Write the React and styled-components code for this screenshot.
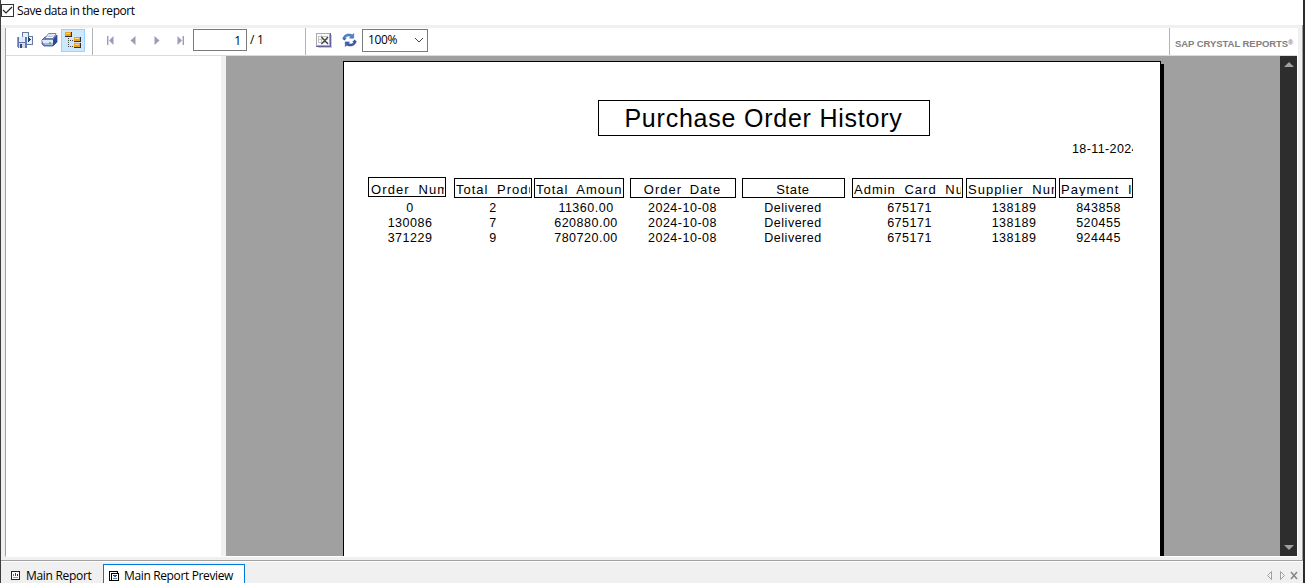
import React from 'react';
import styled, { createGlobalStyle } from 'styled-components';

const Global = createGlobalStyle`
  *{box-sizing:border-box}
  body{margin:0;overflow:hidden;background:#f0f0f0}
`;
const Window = styled.div`
  width:1305px;height:583px;display:flex;flex-direction:column;background:#f0f0f0;
  border-left:1px solid #3c3c3c;border-right:2px solid #2b2b2f;color:#000;
  font:12px/16px "Open Sans","Noto Sans",sans-serif;
`;
const OptionBar = styled.label`
  height:25px;flex:none;background:#fff;display:flex;align-items:flex-start;padding-top:3px;
`;
const Box = styled.span`
  width:13px;height:13px;margin-top:1px;border:1px solid #333;background:#fff;display:flex;svg{display:block}
`;
const UiText = styled.span`
  white-space:pre;letter-spacing:${p => p.$ls || 0}px;margin-left:${p => p.$ml || 0}px;
`;
const PageTotal = styled(UiText)`line-height:24px;`;
const Frame = styled.div`
  height:535px;flex:none;padding:3px 4px 3px 4px;border-right:1px solid #a0a0a0;
`;
const Viewer = styled.div`
  height:529px;width:1293px;border-left:1px solid #a0a0a0;border-right:1px solid #fff;border-bottom:1px solid #fff;
  display:flex;flex-direction:column;
`;
const Toolbar = styled.div`
  height:28px;flex:none;background:#fff;border-bottom:1px solid #dcdcdc;display:flex;align-items:stretch;
`;
const Group = styled.div`
  width:${p => p.$w}px;flex:none;display:flex;align-items:flex-start;padding-left:${p => p.$pl}px;
  border-right:1px solid #b4b4b4;
`;
const ToolButton = styled.button`
  width:${p => p.$w || 24}px;height:23px;margin:1px 0 0;padding:0 0 1px;border:${p => (p.$on ? '1px solid #99d1ff' : '0')};
  background:${p => (p.$on ? '#cce8ff' : 'transparent')};display:flex;align-items:center;justify-content:center;flex:none;
  svg{display:block}
`;
const PageInput = styled.div`
  width:54px;height:22px;margin:1px 0 0 1px;border:1px solid #7a7a7a;text-align:right;line-height:21px;padding-right:5px;
`;
const Zoom = styled.div`
  width:66px;height:23px;margin:1px 0 0 5px;border:1px solid #7a7a7a;display:flex;align-items:center;
  justify-content:space-between;padding:0 3px 1px 5px;
`;
const Brand = styled.div`
  margin-left:auto;width:128px;border-left:1px solid #b4b4b4;padding:8px 0 0 5px;white-space:nowrap;letter-spacing:-.06px;
  font:bold 9.5px/15px "Liberation Sans",Arial,sans-serif;color:#808080;sup{font-size:7px;line-height:0;vertical-align:2px}
`;
const Content = styled.div`flex:1;min-height:0;display:flex;`;
const Tree = styled.div`width:220px;background:#fff;border-right:5px solid #f0f0f0;flex:none;`;
const Canvas = styled.div`flex:1;background:#a0a0a0;padding:5px 0 0 117px;overflow:hidden;`;
const Paper = styled.div`
  width:818px;height:520px;background:#fff;border:1px solid #000;box-shadow:3px 3px 0 #000;
  font-family:"Liberation Sans",Arial,sans-serif;padding:38px 0 0 24px;
`;
const Title = styled.h1`
  width:332px;height:36px;margin:0 0 0 230px;border:1px solid #000;text-align:center;white-space:nowrap;
  padding-right:1px;font-size:25px;line-height:35px;font-weight:400;letter-spacing:.77px;
`;
const PrintDate = styled.div`
  margin:6px 0 0 704px;width:61px;height:15px;line-height:15px;font-size:12.5px;letter-spacing:.4px;overflow:hidden;white-space:nowrap;
`;
const Columns = styled.div`display:flex;align-items:flex-start;margin-top:20px;`;
const Column = styled.div`width:${p => p.$w}px;margin-left:${p => p.$gap}px;flex:none;`;
const Head = styled.div`
  height:20px;margin-top:${p => p.$up ? 0 : 1}px;border:1px solid #000;
  padding:0 1px 0 ${p => (p.$fit ? 0 : p.$up ? 2 : 1)}px;font-size:13px;line-height:${p => (p.$up ? 23 : 21)}px;
  letter-spacing:${p => p.$ls}px;word-spacing:${p => p.$ws}px;
  text-align:${p => (p.$fit ? 'center' : 'left')};
`;
const Clip = styled.div`overflow:hidden;white-space:nowrap;height:17px;`;
const Cell = styled.div`
  height:15px;line-height:15px;font-size:12.5px;text-align:center;letter-spacing:${p => p.$ls}px;
  position:relative;left:${p => p.$dx || 0}px;white-space:nowrap;
`;
const Cells = styled.div`padding-top:${p => p.$up ? 4 : 3}px;`;
const ScrollBar = styled.div`
  width:17px;background:#2d2d2d;display:flex;flex-direction:column;justify-content:space-between;align-items:center;padding:6px 0 6px;
`;
const Arrow = styled.span`
  width:0;height:0;border:5px solid transparent;
  ${p => (p.$up ? 'border-top:0;border-bottom-color:#a0a0a0' : 'border-bottom:0;border-top-color:#a0a0a0')};
`;
const Tabs = styled.div`
  height:23px;border-top:1px solid #a0a0a0;box-shadow:inset 0 1px #fff;display:flex;align-items:flex-start;padding-top:3px;
`;
const Tab = styled.div`
  width:${p => p.$w}px;height:24px;padding:${p => (p.$on ? 3 : 4)}px 0 0 ${p => (p.$on ? 5 : 10)}px;display:flex;
  ${p => p.$on && 'background:#fff;border:1px solid #0078d7;border-bottom:0;'}
  svg{margin-top:3px;flex:none}
`;
const TabNav = styled.div`margin:5px 5px 0 auto;`;

const svg = { shapeRendering: 'crispEdges' };
const Export = () => (
  <svg width="16" height="16" viewBox="0 0 16 16" {...svg}>
    <path d="M5.5.5h6l4 4v8h-10z" fill="#e8f0fb" stroke="#66799f" />
    <path d="M11.5.5v4h4" fill="#fff" stroke="#66799f" />
    <path d="M11 5h1v1h1v1h1v1h-1v1h-1v1h-1z" fill="#084a70" />
    <path d="M0 5h10v11H1v-1H0z" fill="#6279b8" />
    <path d="M2 5h6v5H2z" fill="#e4eafa" /><path d="M0 5h1v10H0z" fill="#8798ca" />
    <path d="M2 11h6v5H2z" fill="#d3d8e4" /><path d="M3 12h2v4H3z" fill="#334777" />
  </svg>
);
const Printer = () => (
  <svg width="17" height="16" viewBox="0 0 17 16">
    <path d="M1 8l3-3h9l3-2v7l-4 4H3l-2-2z" fill="#6f83bd" stroke="#3d4f99" strokeWidth=".8" />
    <path d="M4 6.5L7.5 1.5H15L12 6.5z" fill="#fff" stroke="#5668a3" strokeWidth=".8" />
    <path d="M7.5 3h5M6.5 4.5h5" stroke="#a7b3d4" strokeWidth=".8" />
    <path d="M1 8h11v3H2z" fill="#e3e9f8" /><path d="M2 11h10v2H4z" fill="#a7b5df" />
    <path d="M12 7.5l4-4V10l-4 4z" fill="#31489a" />
    <path d="M8 11h2" stroke="#18c840" strokeWidth="1.7" />
  </svg>
);
const TreeIcon = () => (
  <svg width="16" height="16" viewBox="0 0 16 16" {...svg}>
    <path d="M3.5 6v9M3 8.5h6M3 14.5h6" fill="none" stroke="#444" strokeDasharray="1 1" />
    {[[0, 0], [9, 5], [9, 11]].map(([x, y]) => (
      <g key={`${x}-${y}`}><path d={`M${x} ${y}h7v5h-7z`} fill="#383027" /><path d={`M${x} ${y}h6v4h-6z`} fill="#efa119" /><path d={`M${x + 1} ${y + 1}h4v1h-4z`} fill="#ffd47a" /></g>
    ))}
  </svg>
);
const Nav = ({ back, end }) => (
  <svg width="8" height="9" viewBox="0 0 8 9" fill="#9c9cb8">
    <g transform={back ? undefined : 'translate(8 0) scale(-1 1)'}>
      {end && <path d="M1 0h1.4v9H1z" />}<path d={end ? 'M7.5 0v9L3 4.5z' : 'M6.5 0v9L1.5 4.5z'} />
    </g>
  </svg>
);
const CloseView = () => (
  <svg width="16" height="15" viewBox="0 0 16 15" {...svg}>
    <path d="M2 2h14v13H2z" fill="#c9c7dc" /><path d="M.5.5h13v12H.5z" fill="#fafafa" stroke="#aaa" />
    <path d="M14.5 0v13.5H0" fill="none" stroke="#656199" /><path d="M2 3.5h10M2 6.5h10M2 9.5h10M5.5 2v9M2.5 3v7" stroke="#c4c4c4" />
    <path d="M5.5 4l6.5 7M12 4l-6.5 7" stroke="#444" strokeWidth="1.3" shapeRendering="auto" />
  </svg>
);
const Refresh = () => (
  <svg width="16" height="14" viewBox="0 0 16 14">
    <path d="M1 5C2 1 7-.7 11 1.5L12.5 0v5H8l1.4-1.7C6.5 2.3 4 3 3.5 5z" fill="#4a87c7" stroke="#2c5aa5" strokeWidth=".5" />
    <path d="M15 9c-1 4-6 5.7-10 3.5L3.5 14V9H8l-1.4 1.7C9.5 11.7 12 11 12.5 9z" fill="#405fae" stroke="#283f8e" strokeWidth=".5" />
    <path d="M0 5h5L2.5 7.5zM16 9h-5l2.5-2.5z" fill="#315aa5" />
  </svg>
);
const ReportIcon = ({ preview }) => preview ? (
  <svg width="10" height="10" viewBox="0 0 10 10" {...svg}>
    <path d="M0 0h9v2h1v8H0z" fill="#000" /><path d="M1 1h7v1H2v7H1z" fill="#fff" /><path d="M3 3h6v6H3z" fill="#fff" />
    <path d="M4 4h4v1H4z" fill="#2040b0" /><path d="M5 5h2v1H5z" fill="#2868e0" /><path d="M4 7h4v1H4z" fill="#777" />
  </svg>
) : (
  <svg width="9" height="9" viewBox="0 0 9 9" {...svg}>
    <path d="M.5.5h8v8h-8z" fill="#fff" stroke="#222" /><path d="M2 6.5h5" stroke="#999" /><path d="M2.5 3v2" stroke="#28a060" /><path d="M4.5 2v3" stroke="#2040d0" /><path d="M6.5 3v2" stroke="#333" />
  </svg>
);

const columns = [
  { head: 'Order Num', w: 78, gap: 0, ls: 1.1, ws: 4, up: true, dx: 3, rows: ['0', '130086', '371229'] },
  { head: 'Total Produ', w: 78, gap: 8, ls: 1, ws: 4, rows: ['2', '7', '9'] },
  { head: 'Total Amount', w: 90, gap: 2, ls: 1, ws: 4, dx: 7, rows: ['11360.00', '620880.00', '780720.00'] },
  { head: 'Order Date', w: 106, gap: 6, ls: 1, ws: 3, fit: true, dx: -0.5, rows: ['2024-10-08', '2024-10-08', '2024-10-08'] },
  { head: 'State', w: 103, gap: 6, ls: .6, ws: 0, fit: true, dx: -0.5, rows: ['Delivered', 'Delivered', 'Delivered'] },
  { head: 'Admin Card Nu', w: 111, gap: 7, ls: 1, ws: 4, dx: 2, rows: ['675171', '675171', '675171'] },
  { head: 'Supplier Num', w: 90, gap: 3, ls: 1, ws: 4, dx: 3, rows: ['138189', '138189', '138189'] },
  { head: 'Payment ID', w: 74, gap: 3, ls: 1, ws: 4, dx: 2.5, rows: ['843858', '520455', '924445'] },
];

export default function App() {
  return (
    <><Global /><Window>
      <OptionBar>
        <Box><svg width="11" height="11" viewBox="0 0 11 11"><path d="M1 5l3 3 6-6" fill="none" stroke="#222" strokeWidth="1.2" /></svg></Box>
        <UiText $ml={3} $ls={-.43}>Save data in the report</UiText>
      </OptionBar>
      <Frame><Viewer>
        <Toolbar>
          <Group $w={87} $pl={7}>
            <ToolButton><Export /></ToolButton><ToolButton><Printer /></ToolButton><ToolButton $on><TreeIcon /></ToolButton>
          </Group>
          <Group $w={213} $pl={5}>
            <ToolButton $w={23}><Nav back end /></ToolButton><ToolButton $w={23}><Nav back /></ToolButton>
            <ToolButton $w={25}><Nav /></ToolButton><ToolButton $w={23}><Nav end /></ToolButton>
            <PageInput>1</PageInput><PageTotal $ml={3} $ls={-.3}>/ 1</PageTotal>
          </Group>
          <ToolButton $w={36}><CloseView /></ToolButton><ToolButton $w={15}><Refresh /></ToolButton>
          <Zoom><UiText $ls={-.4}>100%</UiText><svg width="10" height="6" viewBox="0 0 10 6"><path d="M1 1l4 4 4-4" fill="none" stroke="#444" /></svg></Zoom>
          <Brand>SAP CRYSTAL REPORTS<sup>®</sup></Brand>
        </Toolbar>
        <Content>
          <Tree />
          <Canvas><Paper>
            <Title>Purchase Order History</Title>
            <PrintDate>18-11-2024</PrintDate>
            <Columns>{columns.map(c => (
              <Column key={c.head} $w={c.w} $gap={c.gap}>
                <Head $up={c.up} $fit={c.fit} $ls={c.ls} $ws={c.ws}><Clip>{c.head}</Clip></Head>
                <Cells $up={c.up}>{c.rows.map((r, i) => <Cell key={i} $dx={c.dx} $ls={.5}>{r}</Cell>)}</Cells>
              </Column>
            ))}</Columns>
          </Paper></Canvas>
          <ScrollBar><Arrow $up /><Arrow /></ScrollBar>
        </Content>
      </Viewer></Frame>
      <Tabs>
        <Tab $w={102}><ReportIcon /><UiText $ml={6} $ls={-.3}>Main Report</UiText></Tab>
        <Tab $w={142} $on><ReportIcon preview /><UiText $ml={5} $ls={-.36}>Main Report Preview</UiText></Tab>
        <TabNav><svg width="32" height="10" viewBox="0 0 32 10" fill="none" stroke="#a0a0a0"><path d="M5.5.5v8L1.5 4.5zM14.5.5v8l4-4z" /><path d="M25 1l6 7M31 1l-6 7" stroke="#888" strokeWidth="1.6" /></svg></TabNav>
      </Tabs>
    </Window></>
  );
}
